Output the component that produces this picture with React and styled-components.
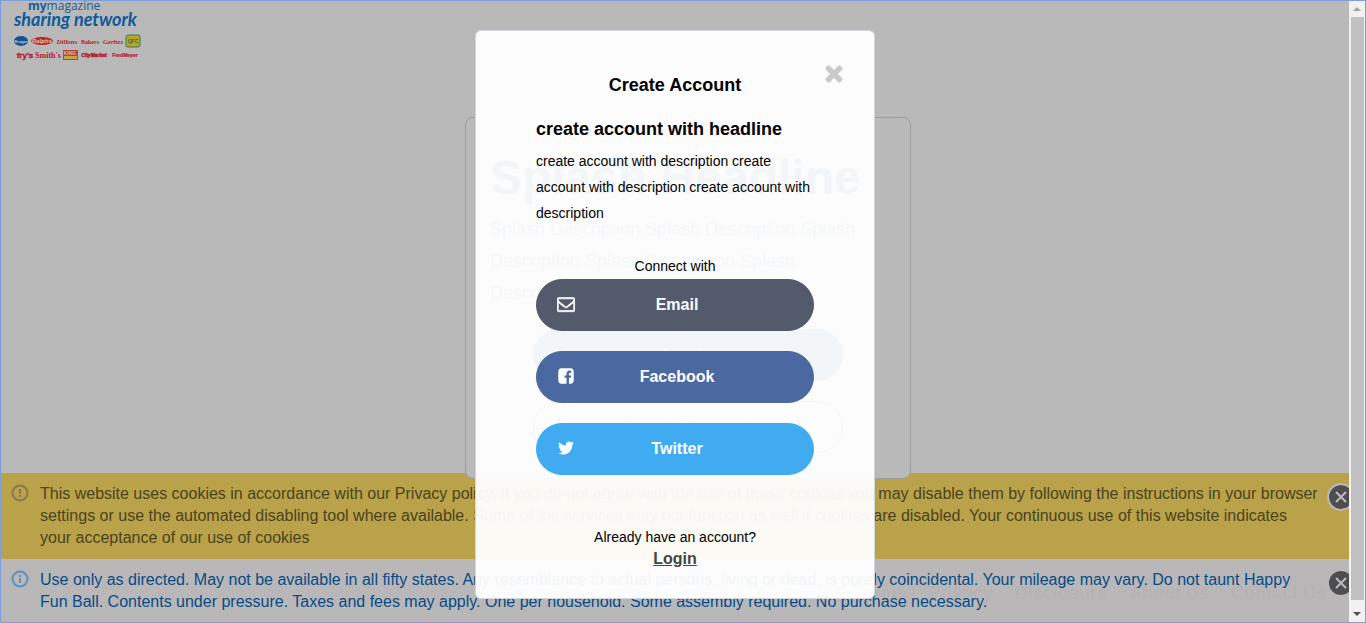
import React from "react";
import styled, { createGlobalStyle } from "styled-components";

const GlobalStyle = createGlobalStyle`
  *, *::before, *::after { box-sizing: border-box; }
  body { margin: 0; background: #b9b9b9; font-family: "Liberation Sans", Arial, sans-serif; color: #000; }
  h1, h2, h3, p { margin: 0; }
  button { font: inherit; cursor: pointer; }
`;

const Frame = styled.div`
  display: grid;
  grid-template-columns: minmax(0, 1fr) 16px;
  min-height: 100vh;
  border: 1px solid #7f9fdc;
`;

const Page = styled.div`
  position: relative;
  display: flex;
  flex-direction: column;
  overflow: hidden;
  background: #b9b9b9;
`;

const Header = styled.header`
  height: 116px;
  padding: 0 12px;
`;

const Logo = styled.svg`
  display: block;
  font-family: "Liberation Sans", Arial, sans-serif;
`;

const Main = styled.main`
  display: flex;
  justify-content: center;
  padding-left: 26px;
`;

const SplashCard = styled.section`
  position: relative;
  z-index: 2;
  width: 446px;
  height: 362px;
  padding: 28px 24px;
  border: 1px solid #999ea2;
  border-radius: 8px;
  background: #b9b9b9;
  color: #004b8d;
`;

const SplashTitle = styled.h1`
  font-size: 48px;
  line-height: 64px;
`;

const SplashText = styled.p`
  margin: 3px 0 20px;
  color: #3c6f9c;
  font-size: 18px;
  line-height: 32px;
`;

const SplashButton = styled.button`
  display: block;
  width: 310px;
  height: 52px;
  margin: 0 auto 20px;
  border: 1px solid #1d5287;
  border-radius: 26px;
  background: ${(p) => (p.$filled ? "#1d5287" : "transparent")};
  color: ${(p) => (p.$filled ? "#b9b9b9" : "#6e8ba3")};
  font-size: 18px;
  font-weight: bold;
`;

const FooterNav = styled.nav`
  position: absolute;
  right: 23px;
  bottom: 18px;
  display: flex;
  gap: 22px;
`;

const FooterLink = styled.a`
  color: #9f9fa1;
  font-size: 18px;
  font-weight: bold;
  line-height: 22px;
  text-decoration: none;
`;

const Notices = styled.div`
  position: absolute;
  inset: auto 0 0 0;
`;

const Notice = styled.div`
  display: grid;
  grid-template-columns: 29px minmax(0, 1fr) 29px;
  padding: 10px 0 10px 10px;
  background: ${(p) => (p.$tone === "warning" ? "#b9a249" : "rgba(186, 183, 184, 0.86)")};
  color: ${(p) => (p.$tone === "warning" ? "#4b421d" : "#054b86")};
  font-size: 16px;
  line-height: 22px;

  &:last-child { padding-bottom: 9px; }
`;

const NoticeIcon = styled.svg`
  width: 18px;
  height: 18px;
  margin-top: 1px;
  color: ${(p) => (p.$tone === "warning" ? "#86774f" : "#5b90bf")};
`;

const NoticeClose = styled.button`
  display: grid;
  place-items: center;
  width: 28px;
  height: 28px;
  margin-left: 7px;
  padding: 0;
  border: 2px solid ${(p) => (p.$tone === "warning" ? "#b9b9b9" : "transparent")};
  border-radius: 50%;
  background: #4e4e50;
  background-clip: padding-box;
  color: #bdbdbd;
`;

const Dialog = styled.section`
  position: absolute;
  z-index: 3;
  top: 29px;
  left: calc(50% - 200px);
  width: 400px;
  padding: 41px 60px 28px;
  border: 1px solid #d0d6dc;
  border-radius: 6px;
  background: rgba(255, 255, 255, 0.95);
`;

const DialogClose = styled.button`
  position: absolute;
  top: 29px;
  right: 27px;
  display: block;
  padding: 0;
  border: 0;
  background: none;
  color: #cacaca;
`;

const DialogTitle = styled.h2`
  font-size: 18px;
  line-height: 26px;
  text-align: center;
`;

const Headline = styled.h3`
  margin-top: 18px;
  font-size: 18px;
  line-height: 26px;
`;

const Description = styled.p`
  margin-top: 6px;
  font-size: 14px;
  line-height: 26px;
`;

const Prompt = styled.p`
  margin-top: 27px;
  font-size: 14px;
  line-height: 26px;
  text-align: center;
`;

const Providers = styled.div`
  display: grid;
  gap: 20px;
`;

const ProviderButton = styled.button`
  display: grid;
  grid-template-columns: 18px 1fr 14px;
  align-items: center;
  height: 52px;
  padding: 0 20px;
  border: 1px solid ${(p) => p.$color};
  border-radius: 26px;
  background: ${(p) => p.$color};
  color: #fff;
  font-size: 16px;
  font-weight: bold;
  line-height: 22px;

  svg { margin-bottom: 2px; }
`;

const Account = styled.div`
  display: flex;
  flex-direction: column;
  align-items: center;
  margin-top: 51px;
  font-size: 14px;
  line-height: 22px;
`;

const LoginLink = styled.a`
  color: #444;
  font-size: 16px;
  font-weight: bold;
`;

const Scrollbar = styled.div`
  display: flex;
  flex-direction: column;
  align-items: center;
  background: #f1f1f1;
`;

const ScrollThumb = styled.div`
  flex: 1;
  width: 13px;
  background: #c1c1c1;
`;

const ScrollArrow = styled.svg`
  display: block;
  width: 16px;
  height: ${(p) => p.$height}px;
`;

const GLYPHS = {
  times:
    "M1490 1322q0 40-28 68l-136 136q-28 28-68 28t-68-28l-294-294-294 294q-28 28-68 28t-68-28l-136-136q-28-28-28-68t28-68l294-294-294-294q-28-28-28-68t28-68l136-136q28-28 68-28t68 28l294 294 294-294q28-28 68-28t68 28l136 136q28 28 28 68t-28 68l-294 294 294 294q28 28 28 68z",
  envelope:
    "M1664 1504v-768q-32 36-69 66-268 206-426 338-51 43-83 67t-86.500 48.500-102.500 24.500h-2q-48 0-102.500-24.500t-86.500-48.500-83-67q-158-132-426-338-37-30-69-66v768q0 13 9.500 22.500t22.500 9.500h1472q13 0 22.500-9.500t9.500-22.500zm0-1051v-24.500l-.5-13-3-12.500-5.500-9-9-7.500-14-2.500h-1472q-13 0-22.500 9.500t-9.500 22.500q0 168 147 284 193 152 401 317 6 5 35 29.500t46 37.500 44.500 31.500 50.500 27.500 43 9h2q20 0 43-9t50.500-27.500 44.500-31.500 46-37.500 35-29.500q208-165 401-317 54-43 100.500-115.500t46.500-131.500zm128-37v1088q0 66-47 113t-113 47h-1472q-66 0-113-47t-47-113v-1088q0-66 47-113t113-47h1472q66 0 113 47t47 113z",
  facebook:
    "M1376 128q119 0 203.500 84.500t84.500 203.500v960q0 119-84.500 203.500t-203.500 84.500h-188v-595h199l30-232h-229v-148q0-56 23.500-84t91.500-28l122-1v-207q-63-9-178-9-136 0-217.500 80t-81.500 226v171h-200v232h200v595h-532q-119 0-203.500-84.500t-84.500-203.500v-960q0-119 84.500-203.500t203.500-84.500h960z",
  twitter:
    "M1684 408q-67 98-162 167 1 14 1 42 0 130-38 259.500t-115.500 248.500-184.500 210.500-258 146-323 54.500q-271 0-496-145 35 4 78 4 225 0 401-138-105-2-188-64.500t-114-159.500q33 5 61 5 43 0 85-11-112-23-185.500-111.500t-73.500-205.500v-4q68 38 146 41-66-44-105-115t-39-154q0-88 44-163 121 149 294.500 238.500t371.500 99.500q-8-38-8-74 0-134 94.500-228.500t228.500-94.500q140 0 236 102 109-21 205-78-37 115-142 178 93-10 186-50z",
};

function Glyph({ name, size, weight = 0 }) {
  return (
    <svg
      width={size}
      height={size}
      viewBox="0 0 1792 1792"
      fill="currentColor"
      stroke="currentColor"
      strokeWidth={weight}
      aria-hidden="true"
    >
      <path d={GLYPHS[name]} />
    </svg>
  );
}

function CloseMark() {
  return (
    <svg width="12" height="12" viewBox="0 0 12 12" fill="none" stroke="currentColor" strokeWidth="2" aria-hidden="true">
      <path d="M1 1l10 10M11 1L1 11" />
    </svg>
  );
}

function BrandLogo() {
  return (
    <Logo width="132" height="62" viewBox="0 0 132 62" role="img" aria-label="mymagazine sharing network">
      <text x="15" y="9" fontSize="12" fill="#1a5c94" fontFamily="Open Sans, sans-serif">
        <tspan fontWeight="700">my</tspan>magazine
      </text>
      <text x="1" y="25" fontSize="18" fontStyle="italic" fontWeight="bold" fill="#0c599c" fontFamily="Lato, cursive">
        sharing network
      </text>
      <ellipse cx="8" cy="40" rx="7" ry="5" fill="#145293" />
      <ellipse cx="29" cy="40" rx="11" ry="4" fill="#bb2c22" />
      <rect x="113" y="34" width="14" height="12" rx="2" fill="#bba51f" stroke="#327a62" />
      <rect x="50" y="49" width="15" height="10" fill="#b8452f" />
      <rect x="51" y="55" width="13" height="3" fill="#c6a544" />
      <g fontSize="7" fontWeight="bold" fill="#b3202c" textAnchor="middle">
        <text x="8" y="42" fontSize="4" fill="#c3cbd3">Kroger</text>
        <text x="29" y="42" fontSize="6" fontStyle="italic" fill="#d5c2c0">Ralphs</text>
        <text x="54" y="43" fontSize="7" fontStyle="italic" fontFamily="Liberation Serif, serif">Dillons</text>
        <text x="77" y="43" fontSize="6" fontFamily="Liberation Serif, serif">Bakers</text>
        <text x="100" y="43" fontSize="7" fontStyle="italic" fontFamily="Liberation Serif, serif">Gerbes</text>
        <text x="120" y="42" fontSize="5" fill="#2d6d58">QFC</text>
        <text x="12" y="57" fontSize="8" stroke="#b3202c" strokeWidth="0.4">fry's</text>
        <text x="35" y="57" fontSize="8" fontFamily="Liberation Serif, serif">Smith's</text>
        <text x="57" y="54" fontSize="5" fill="#d0bab5">KING</text>
        <text x="81" y="56" fontSize="5" fontStyle="italic" stroke="#b3202c" strokeWidth="0.4">CityMarket</text>
        <text x="112" y="56" fontSize="5" stroke="#b3202c" strokeWidth="0.2">FredMeyer</text>
      </g>
    </Logo>
  );
}

function NoticeBar({ tone, children }) {
  return (
    <Notice $tone={tone} role="status">
      <NoticeIcon $tone={tone} viewBox="0 0 18 18" fill="none" stroke="currentColor" strokeWidth="2" aria-hidden="true">
        <circle cx="9" cy="9" r="7.500" />
        <path d={tone === "warning" ? "M9 5v5M9 11v2" : "M9 5v2M9 8v5"} />
      </NoticeIcon>
      <p>{children}</p>
      <NoticeClose $tone={tone} type="button" aria-label="Dismiss notice">
        <CloseMark />
      </NoticeClose>
    </Notice>
  );
}

const providers = [
  { name: "Email", icon: "envelope", color: "#525a6b", weight: 70 },
  { name: "Facebook", icon: "facebook", color: "#4b69a0" },
  { name: "Twitter", icon: "twitter", color: "#40abf1" },
];

const footerLinks = ["Terms", "Privacy", "Disclosure", "About Us", "Contact Us"];

export default function App() {
  return (
    <>
      <GlobalStyle />
      <Frame>
        <Page>
          <Header>
            <BrandLogo />
          </Header>
          <Main>
            <SplashCard>
              <SplashTitle>Splash Headline</SplashTitle>
              <SplashText>
                Splash Description Splash Description Splash Description Splash Description Splash Description
              </SplashText>
              <SplashButton $filled type="button">Login</SplashButton>
              <SplashButton type="button">Create Account</SplashButton>
            </SplashCard>
          </Main>
          <FooterNav>
            {footerLinks.map((label) => (
              <FooterLink key={label} href="#">{label}</FooterLink>
            ))}
          </FooterNav>
          <Notices>
            <NoticeBar tone="warning">
              This website uses cookies in accordance with our Privacy policy. If you do not agree with the use of these
              cookies you may disable them by following the instructions in your browser settings or use the automated
              disabling tool where available. Some of the services may not function as well if cookies are disabled. Your
              continuous use of this website indicates your acceptance of our use of cookies
            </NoticeBar>
            <NoticeBar tone="info">
              Use only as directed. May not be available in all fifty states. Any resemblance to actual persons, living or
              dead, is purely coincidental. Your mileage may vary. Do not taunt Happy Fun Ball. Contents under pressure.
              Taxes and fees may apply. One per household. Some assembly required. No purchase necessary.
            </NoticeBar>
          </Notices>
          <Dialog role="dialog" aria-labelledby="dialog-title">
            <DialogClose type="button" aria-label="Close">
              <Glyph name="times" size={26} />
            </DialogClose>
            <DialogTitle id="dialog-title">Create Account</DialogTitle>
            <Headline>create account with headline</Headline>
            <Description>
              create account with description create account with description create account with description
            </Description>
            <Prompt>Connect with</Prompt>
            <Providers>
              {providers.map(({ name, icon, color, weight }) => (
                <ProviderButton key={name} $color={color} type="button">
                  <Glyph name={icon} size={18} weight={weight} />
                  <span>{name}</span>
                </ProviderButton>
              ))}
            </Providers>
            <Account>
              <span>Already have an account?</span>
              <LoginLink href="#">Login</LoginLink>
            </Account>
          </Dialog>
        </Page>
        <Scrollbar aria-hidden="true">
          <ScrollArrow $height={16} viewBox="0 0 16 16">
            <path d="M4 10h8L8 6z" fill="#a3a3a3" />
          </ScrollArrow>
          <ScrollThumb />
          <ScrollArrow $height={22} viewBox="0 0 16 22">
            <path d="M4 12h8l-4 4z" fill="#505050" />
          </ScrollArrow>
        </Scrollbar>
      </Frame>
    </>
  );
}
